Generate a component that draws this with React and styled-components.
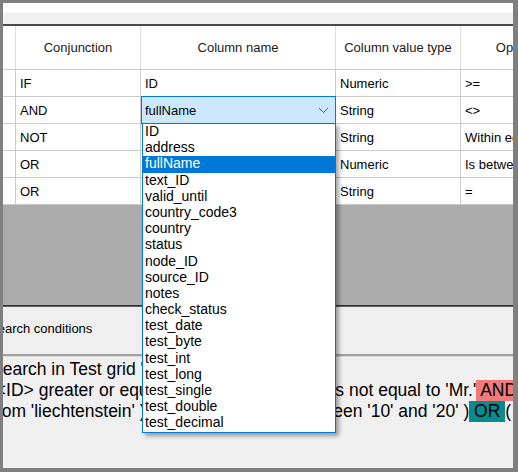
import React from 'react';
import styled, { createGlobalStyle } from 'styled-components';

const Global = createGlobalStyle`
  html, body { margin: 0; padding: 0; background: #808080; }
  body { font-family: "Liberation Sans", Arial, sans-serif; }
  *, *::before, *::after { box-sizing: border-box; }
`;

const Frame = styled.div`
  width: 518px;
  height: 472px;
  border-style: solid;
  border-color: #7f7f7f;
  border-width: 3px 5px 4px 3px;
  display: flex;
  flex-direction: column;
  overflow: hidden;
  background: #f0f0f0;
`;

const TitleStrip = styled.div`
  height: 10px;
  flex-shrink: 0;
  background: #ffffff;
`;

const ToolStrip = styled.div`
  height: 13px;
  flex-shrink: 0;
  background: #f0f0f0;
  border-bottom: 2px solid #4a4a4a;
`;

const GridArea = styled.div`
  height: 279px;
  flex-shrink: 0;
  background: #ababab;
`;

const Table = styled.div`
  display: grid;
  grid-template-columns: 13px 125px 195px 125px 122px;
  width: max-content;
  font-size: 13px;
  color: #000;
`;

const HeadCell = styled.div`
  height: 44px;
  background: #fff;
  border-right: 1px solid #dcdcdc;
  border-bottom: 1px solid #cdcdcd;
  display: flex;
  align-items: center;
  justify-content: center;
  color: #1a1a1a;
  white-space: nowrap;
  overflow: hidden;
`;

const Cell = styled.div`
  position: relative;
  height: 27px;
  display: flex;
  align-items: center;
  padding-left: 4px;
  white-space: nowrap;
  background: ${p => (p.$editing ? '#cce8ff' : '#fff')};
  border-right: 1px solid ${p => (p.$editing ? '#0078d7' : '#cbcbcb')};
  border-bottom: 1px solid ${p => (p.$editing ? '#0078d7' : '#cbcbcb')};
  ${p => p.$editing && 'border-top: 1px solid #0078d7; border-left: 1px solid #0078d7; margin-top: -1px; height: 28px; padding-left: 3px;'}
`;

const CellText = styled.span`
  flex: 1;
  overflow: hidden;
`;

const Chevron = styled.svg`
  width: 11px;
  height: 7px;
  margin-right: 6px;
  flex-shrink: 0;
`;

const DropList = styled.ul`
  position: absolute;
  z-index: 10;
  top: 100%;
  left: 0;
  width: 194px;
  margin: 0;
  padding: 0;
  list-style: none;
  background: #fff;
  border: 1px solid #0078d7;
  box-shadow: 3px 3px 4px rgba(0, 0, 0, 0.35);
  font-size: 14px;
`;

const DropItem = styled.li`
  height: 16.2px;
  line-height: 15px;
  padding-left: 2px;
  white-space: nowrap;
  background: ${p => (p.$selected ? '#0078d7' : 'transparent')};
  color: ${p => (p.$selected ? '#fff' : '#000')};
`;

const DarkRule = styled.div`
  height: 2px;
  flex-shrink: 0;
  border-top: 1px solid #2e2e2e;
  border-bottom: 1px solid #5e5e5e;
`;

const ConditionsBar = styled.div`
  height: 47px;
  flex-shrink: 0;
  background: #efefef;
  display: flex;
  align-items: center;
  padding-bottom: 4px;
  overflow: hidden;
  font-size: 13px;
  color: #000;
`;

const BarLabel = styled.span`
  white-space: nowrap;
  margin-left: -14px;
`;

const Splitter = styled.div`
  height: 3px;
  flex-shrink: 0;
  border-top: 2px solid #a2a2a2;
  background: #d6d6d6;
`;

const TextPanel = styled.div`
  flex: 1;
  background: #f0f0f0;
  overflow: hidden;
  padding-top: 2px;
`;

const TextBody = styled.div`
  margin-left: -12px;
  font-size: 17.5px;
  line-height: 21px;
  color: #000;
  white-space: pre;
`;

const Line = styled.div`
  height: 21px;
`;

const Mark = styled.span`
  display: inline-block;
  line-height: 21px;
  height: 21px;
  background: ${p => p.$bg};
`;

const headers = ['', 'Conjunction', 'Column name', 'Column value type', 'Operator'];

const rows = [
  { conj: 'IF', col: 'ID', type: 'Numeric', op: '>=' },
  { conj: 'AND', col: 'fullName', type: 'String', op: '<>', editing: true },
  { conj: 'NOT', col: 'country', type: 'String', op: 'Within edges' },
  { conj: 'OR', col: 'test_int', type: 'Numeric', op: 'Is between' },
  { conj: 'OR', col: 'status', type: 'String', op: '=' },
];

const options = [
  'ID', 'address', 'fullName', 'text_ID', 'valid_until', 'country_code3', 'country',
  'status', 'node_ID', 'source_ID', 'notes', 'check_status', 'test_date', 'test_byte',
  'test_int', 'test_long', 'test_single', 'test_double', 'test_decimal',
];

function ComboCell({ value }) {
  return (
    <Cell $editing>
      <CellText>{value}</CellText>
      <Chevron viewBox="0 0 11 7">
        <path d="M1 1 L5.5 5.5 L10 1" fill="none" stroke="#5a5a5a" strokeWidth="1" />
      </Chevron>
      <DropList>
        {options.map(o => (
          <DropItem key={o} $selected={o === value}>{o}</DropItem>
        ))}
      </DropList>
    </Cell>
  );
}

export default function App() {
  return (
    <>
      <Global />
      <Frame>
        <TitleStrip />
        <ToolStrip />
        <GridArea>
          <Table>
            {headers.map((h, i) => (
              <HeadCell key={i}>{h}</HeadCell>
            ))}
            {rows.map((r, i) => (
              <React.Fragment key={i}>
                <Cell />
                <Cell><CellText>{r.conj}</CellText></Cell>
                {r.editing ? (
                  <ComboCell value={r.col} />
                ) : (
                  <Cell><CellText>{r.col}</CellText></Cell>
                )}
                <Cell><CellText>{r.type}</CellText></Cell>
                <Cell><CellText>{r.op}</CellText></Cell>
              </React.Fragment>
            ))}
          </Table>
        </GridArea>
        <DarkRule />
        <ConditionsBar>
          <BarLabel>Search conditions</BarLabel>
        </ConditionsBar>
        <Splitter />
        <TextPanel>
          <TextBody>
            <Line>Search in Test grid 'dataGridView1':</Line>
            <Line>
              {" <ID> greater or equal to 5 AND<fullName> is not equal to 'Mr.'"}
              <Mark $bg="#f07b7b"> AND </Mark>
              {"( <country> is different"}
            </Line>
            <Line>
              {"from 'liechtenstein' ) AND (<test_int> is between '10' and '20' )"}
              <Mark $bg="#0a8a8a"> OR </Mark>
              {"( <status> equal"}
            </Line>
          </TextBody>
        </TextPanel>
      </Frame>
    </>
  );
}
